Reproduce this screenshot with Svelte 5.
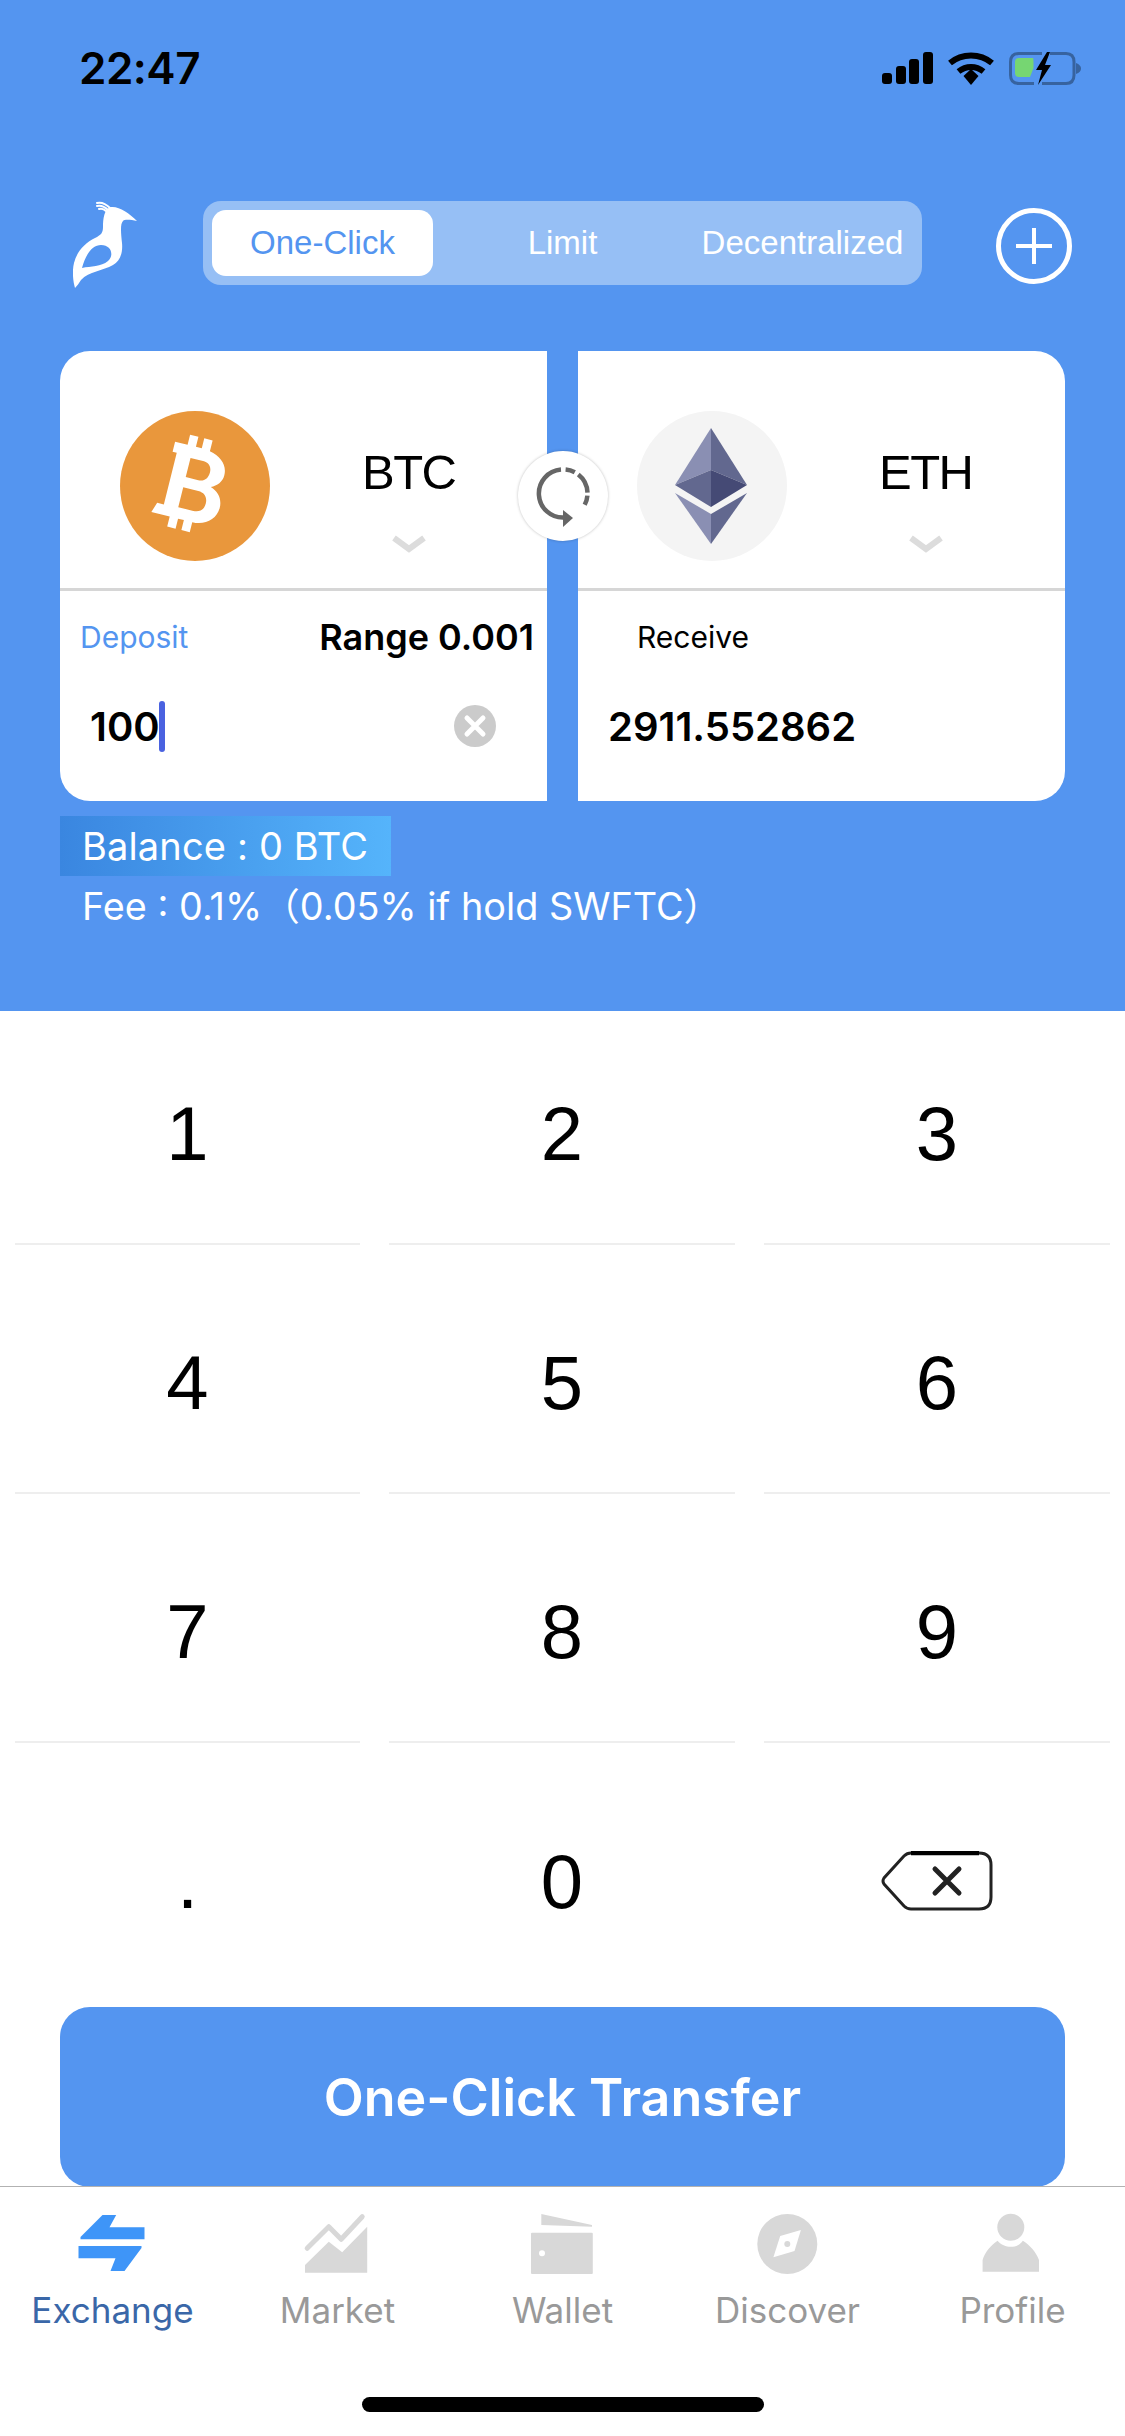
<script>
	const tabs = ['One-Click', 'Limit', 'Decentralized'];
	const keys = ['1', '2', '3', '4', '5', '6', '7', '8', '9', '.', '0', 'del'];
	const navItems = [
		{ label: 'Exchange', icon: 'exchange' },
		{ label: 'Market', icon: 'market' },
		{ label: 'Wallet', icon: 'wallet' },
		{ label: 'Discover', icon: 'discover' },
		{ label: 'Profile', icon: 'profile' }
	];
</script>

<div class="screen">
	<header class="top">
		<div class="status">
			<span class="time">22:47</span>
			<div class="status-icons">
				<svg width="51" height="32" viewBox="0 0 51 32">
					<rect x="0" y="21" width="10" height="11" rx="3" />
					<rect x="14" y="14" width="10" height="18" rx="3" />
					<rect x="27" y="7" width="10" height="25" rx="3" />
					<rect x="41" y="0" width="10" height="32" rx="3" />
				</svg>
				<svg class="wifi" width="46" height="33" viewBox="0 0 46 33" fill="none" stroke="#000" stroke-width="6">
					<path d="M2 11 C14 1 32 1 44 11" />
					<path d="M10.500 19.500 C18 13.500 28 13.500 35.500 19.500" />
					<path d="M15.500 24 L23 17 L30.500 24 L23 33 Z" fill="#000" stroke="none" />
				</svg>
				<svg class="battery" width="72" height="33" viewBox="0 0 72 33">
					<path d="M33 1.500 H10 Q1.500 1.500 1.500 10 V23 Q1.500 31.500 10 31.500 H25 M41 1.500 H57 Q65 1.500 65 10 V23 Q65 31.500 57 31.500 H33" fill="none" stroke="#37639f" stroke-width="3" />
					<path d="M67 11 Q72 13 72 16.500 Q72 20 67 22 Z" fill="#37639f" />
					<path d="M10 6 H24 Q24.500 6 24.500 12 V16 L21 25 H10 Q6 25 6 21 V10 Q6 6 10 6 Z" fill="#76d672" />
					<path d="M38 0 L27 18 H33 L29 33 L42 13 H36 L41 0 Z" fill="#000" />
				</svg>
			</div>
		</div>

		<div class="toolbar">
			<svg class="logo" width="64" height="88" viewBox="0 0 64 88">
				<path fill="#fff" fill-rule="evenodd" d="M38 6 C46 5 56 12 64 20 C58 19 52 18 50 20 C47 23 48 32 49 42 C50 52 47 60 40 64 C30 70 16 70 8 79 C6 82 4 85 2 87 C0 80 -1 70 1 62 C4 50 12 42 22 37 C28 34 30 32 30 26 C30 18 31 8 38 6 Z M28 44 C20 44 13 52 9 67 C18 65 28 66 35 60 C41 55 39 44 28 44 Z" />
				<path d="M37 7 C33 3 28 1 24 2 M35 9 C32 6 28 4 24 5 M33 10 C31 8 29 7 26 8" fill="none" stroke="#fff" stroke-width="2" stroke-linecap="round" />
			</svg>

			<div class="tabs">
				{#each tabs as tab, i}
					<div class="tab tab-{i}" class:active={i === 0}>{tab}</div>
				{/each}
			</div>

			<svg class="plus" width="76" height="76" viewBox="0 0 76 76" fill="none" stroke="#fff" stroke-width="5">
				<circle cx="38" cy="38" r="35.500" />
				<path d="M20 38 H56 M38 20 V56" stroke-width="4" />
			</svg>
		</div>

		<div class="cards">
			<section class="card card-left">
				<div class="coin-row">
					<svg class="coin" width="150" height="150" viewBox="0 0 150 150">
						<circle cx="75" cy="75" r="75" fill="#e9973c" />
						<g transform="translate(72 73) rotate(14) scale(0.86) translate(-78 -75)">
							<path fill="#fff" fill-rule="evenodd" d="M47 32 H62 V20 H72 V32 H79 V20 H89 V33 C103 36 112 44 112 56 C112 64 107 70 100 73 C110 76 116 84 116 94 C116 108 104 118 89 118 V130 H79 V118 H72 V130 H62 V118 H40 L44 106 H52 V44 H47 Z M69 46 V69 H84 C91 69 95 64 95 57 C95 50 91 46 84 46 Z M69 81 V105 H87 C95 105 99 100 99 93 C99 86 95 81 87 81 Z" />
						</g>
					</svg>
					<div class="coin-name">
						<span>BTC</span>
						<svg class="chevron" width="34" height="19" viewBox="0 0 34 19" fill="none" stroke="#dcdcdc" stroke-width="6"><path d="M2 3 L17 14 L32 3" /></svg>
					</div>
				</div>
				<div class="amount">
					<div class="amount-labels">
						<span class="deposit">Deposit</span>
						<span class="range">Range 0.001</span>
					</div>
					<div class="amount-value">
						<span class="value">100</span><span class="caret"></span>
						<svg class="clear" width="42" height="42" viewBox="0 0 42 42">
							<circle cx="21" cy="21" r="21" fill="#cbcbcb" />
							<path d="M13 13 L29 29 M29 13 L13 29" stroke="#fff" stroke-width="5" stroke-linecap="round" />
						</svg>
					</div>
				</div>
			</section>

			<section class="card card-right">
				<div class="coin-row">
					<svg class="coin" width="150" height="150" viewBox="0 0 150 150">
						<circle cx="75" cy="75" r="75" fill="#f4f4f4" />
						<path d="M74 17 L38 74 L74 59 Z" fill="#8a8fb3" />
						<path d="M74 17 L110 74 L74 59 Z" fill="#62688f" />
						<path d="M38 74 L74 59 V96 Z" fill="#62688f" />
						<path d="M110 74 L74 59 V96 Z" fill="#454a75" />
						<path d="M38 82 L74 103 V133 Z" fill="#8a8fb3" />
						<path d="M110 82 L74 103 V133 Z" fill="#62688f" />
					</svg>
					<div class="coin-name">
						<span>ETH</span>
						<svg class="chevron" width="34" height="19" viewBox="0 0 34 19" fill="none" stroke="#dcdcdc" stroke-width="6"><path d="M2 3 L17 14 L32 3" /></svg>
					</div>
				</div>
				<div class="amount">
					<div class="amount-labels">
						<span class="receive">Receive</span>
					</div>
					<div class="amount-value">
						<span class="value">2911.552862</span>
					</div>
				</div>
			</section>

			<div class="swap">
				<svg width="90" height="90" viewBox="0 0 90 90" fill="none" stroke="#666" stroke-width="4.500">
					<path d="M43 18.600 A24 24 0 0 0 46 66.500" />
					<path d="M47.600 18.600 A24 24 0 0 1 56.800 21.300" />
					<path d="M60.300 23.600 A24 24 0 0 1 69.500 41.700" />
					<path d="M69.400 44.600 A24 24 0 0 1 66.700 53.800" />
					<path d="M45 59 L55 67 L45 76 Z" fill="#666" stroke="none" />
				</svg>
			</div>
		</div>

		<div class="balance">Balance : 0 BTC</div>
		<div class="fee">Fee : 0.1%（0.05% if hold SWFTC）</div>
	</header>

	<div class="keypad">
		{#each keys as key, i}
			<button class="key" class:last-row={i > 8} class:del={key === 'del'} type="button">
				{#if key === 'del'}
					<svg width="112" height="60" viewBox="0 0 112 60" fill="none" stroke="#222">
						<path d="M30 2 H98 Q110 2 110 14 V46 Q110 58 98 58 H30 Q26 58 23 55 L3 33 Q1 30 3 27 L23 5 Q26 2 30 2 Z" stroke-width="3" />
						<path d="M30 2 H98" stroke="#000" stroke-width="4.500" />
						<path d="M54 18 L78 42 M78 18 L54 42" stroke-width="5" stroke-linecap="round" />
					</svg>
				{:else}
					{key}
				{/if}
			</button>
		{/each}
	</div>

	<div class="action">
		<button class="transfer" type="button">One-Click Transfer</button>
	</div>

	<nav class="nav">
		{#each navItems as item}
			<div class="nav-item" class:current={item.icon === 'exchange'}>
				<svg width="66" height="62" viewBox="0 0 66 62">
					{#if item.icon === 'exchange'}
						<path d="M22.500 2 H36.200 L29.500 14.300 H64.500 V26.300 H0.500 V24 Z" fill="#3e95f8" />
						<path d="M-1.500 33 H61.500 V35 L44.500 58 H30.500 L35.500 45.300 H-1.500 Z" fill="#3e95f8" />
					{:else if item.icon === 'market'}
						<path d="M2.200 35.300 L23.800 13.700 L36.200 26.300 L57.200 3.700" fill="none" stroke="#d8d8d8" stroke-width="5" stroke-linecap="round" stroke-linejoin="round" />
						<path d="M0 52 L23.800 28.700 L37.200 39.300 L62.200 13.700 V59.700 H0 Z" fill="#d8d8d8" />
					{:else if item.icon === 'wallet'}
						<path d="M11.300 1 L62 12 V13.700 L11.300 12 Z" fill="#d8d8d8" />
						<rect x="1" y="19.700" width="61.800" height="41.300" rx="1" fill="#d8d8d8" />
						<circle cx="12" cy="40.300" r="3" fill="#fff" />
					{:else if item.icon === 'discover'}
						<circle cx="32.300" cy="31" r="30" fill="#d8d8d8" />
						<path d="M45.900 17 L25.200 23 L18.400 44.300 L39.500 38 Z" fill="#fff" />
						<circle cx="32.300" cy="31" r="3" fill="#d8d8d8" />
					{:else}
						<circle cx="30.800" cy="14.300" r="13.500" fill="#d8d8d8" />
						<path d="M2.600 58.700 V47 C5 39 11 32 17.600 27.700 C21 32 26 33.700 30.800 33.700 C36 33.700 40 32 42.900 27.700 C50 32 56 39 59 47 V58.700 Z" fill="#d8d8d8" />
					{/if}
				</svg>
				<span>{item.label}</span>
			</div>
		{/each}
	</nav>

	<div class="home-bar"></div>
</div>

<style>
	:global(body) {
		margin: 0;
		background: #fff;
	}

	.screen {
		width: 1125px;
		height: 2436px;
		overflow: hidden;
		background: #fff;
		font-family: Inter, 'Noto Sans CJK SC', sans-serif;
		display: flex;
		flex-direction: column;
	}

	.top {
		height: 1011px;
		box-sizing: border-box;
		background: #5495f0;
		color: #fff;
		flex: none;
	}

	.status {
		height: 201px;
		box-sizing: border-box;
		padding: 44px 44px 0 79px;
		display: flex;
		justify-content: space-between;
		align-items: flex-start;
	}

	.time {
		font-size: 44px;
		line-height: 48px;
		font-weight: 600;
		letter-spacing: -0.5px;
		color: #000;
	}

	.status-icons {
		display: flex;
		gap: 15px;
		padding-top: 8px;
	}

	.status-icons svg {
		flex: none;
	}

	.toolbar {
		height: 150px;
		box-sizing: border-box;
		padding: 0 53px 0 73px;
		display: flex;
		align-items: flex-start;
	}

	.tabs {
		flex: none;
		width: 719px;
		height: 84px;
		margin-left: 66px;
		box-sizing: border-box;
		padding: 9px;
		background: #96bff5;
		border-radius: 18px;
		display: flex;
		align-items: center;
		font-family: 'Liberation Sans', sans-serif;
		font-size: 33px;
	}

	.tab {
		height: 66px;
		line-height: 66px;
		text-align: center;
	}

	.tab-0 {
		width: 221px;
	}

	.tab-1 {
		width: 259px;
	}

	.tab-2 {
		flex: 1;
		white-space: nowrap;
	}

	.tab.active {
		background: #fff;
		color: #5495f0;
		border-radius: 14px;
	}

	.plus {
		flex: none;
		margin: 7px 0 0 74px;
	}

	.cards {
		position: relative;
		margin: 0 60px;
		display: flex;
		gap: 31px;
		color: #000;
	}

	.card {
		flex: 1;
		height: 450px;
		background: #fff;
	}

	.card-left {
		border-radius: 30px 0 0 30px;
	}

	.card-right {
		border-radius: 0 30px 30px 0;
	}

	.coin-row {
		height: 240px;
		box-sizing: border-box;
		border-bottom: 3px solid #d6d6d6;
		display: flex;
		align-items: flex-start;
		padding-top: 60px;
	}

	.card-left .coin-row {
		padding-left: 60px;
	}

	.card-right .coin-row {
		padding-left: 59px;
	}

	.coin-name {
		display: flex;
		flex-direction: column;
		align-items: center;
		margin-left: 92px;
		font-family: 'Liberation Sans', sans-serif;
		font-size: 49px;
		letter-spacing: -1.5px;
		line-height: 56px;
		padding-top: 33px;
	}

	.chevron {
		margin-top: 35px;
	}

	.amount-labels {
		height: 64px;
		display: flex;
		justify-content: space-between;
		align-items: flex-end;
		padding: 0 13px 0 20px;
		font-size: 30px;
	}

	.deposit {
		color: #5495f0;
	}

	.range {
		font-size: 36px;
		line-height: 40px;
		font-weight: 600;
		margin-bottom: -2px;
	}

	.receive {
		margin-left: 39px;
	}

	.amount-value {
		position: relative;
		display: flex;
		align-items: center;
		height: 60px;
		margin-top: 41px;
		padding-left: 30px;
		font-size: 40px;
		font-weight: 600;
	}

	.caret {
		width: 6px;
		height: 51px;
		margin-left: -1px;
		background: #4a62e0;
		border-radius: 3px;
	}

	.clear {
		position: absolute;
		left: 394px;
		top: 9px;
	}

	.swap {
		position: absolute;
		left: 458px;
		top: 100px;
		width: 90px;
		height: 90px;
		background: #fff;
		border-radius: 50%;
		box-shadow: 0 0 3px rgba(0, 0, 0, 0.25);
	}

	.balance {
		width: 331px;
		height: 60px;
		margin: 15px 0 0 60px;
		box-sizing: border-box;
		padding-left: 22px;
		line-height: 60px;
		font-size: 38px;
		letter-spacing: 0.15px;
		white-space: nowrap;
		background: linear-gradient(90deg, #3a86e0, #55b4fb);
	}

	.fee {
		margin: 0 0 0 82px;
		line-height: 60px;
		font-size: 37.8px;
		white-space: nowrap;
	}

	.keypad {
		height: 980px;
		flex: none;
		box-sizing: border-box;
		display: grid;
		grid-template-columns: 345px 346px 346px;
		grid-template-rows: 234px 249px 249px 248px;
		column-gap: 29px;
		padding: 0 15px;
	}

	.key {
		border: 0;
		border-bottom: 2px solid #eee;
		background: none;
		color: #000;
		font-family: 'Liberation Sans', sans-serif;
		font-size: 76px;
		line-height: 86px;
		display: flex;
		align-items: flex-end;
		justify-content: center;
		padding: 0 0 66px;
	}

	.key.last-row {
		border-bottom: 0;
	}

	.key.del {
		padding-bottom: 80px;
	}

	.action {
		flex: none;
		height: 180px;
		margin: 16px 60px 0;
	}

	.transfer {
		display: block;
		width: 100%;
		height: 100%;
		border: 0;
		border-radius: 30px;
		background: #5495f0;
		color: #fff;
		font-family: inherit;
		font-size: 52px;
		font-weight: 600;
	}

	.nav {
		margin-top: -1px;
		flex: none;
		height: 211px;
		box-sizing: border-box;
		border-top: 1px solid #b2b2b2;
		padding-top: 26px;
		display: grid;
		grid-template-columns: repeat(5, 225px);
	}

	.nav-item {
		display: flex;
		flex-direction: column;
		align-items: center;
		color: #999;
		font-size: 35px;
		height: 130px;
	}

	.nav-item svg {
		overflow: visible;
	}

	.nav-item span {
		margin-top: 13px;
		line-height: 44px;
	}

	.nav-item.current {
		color: #3a67a8;
	}

	.home-bar {
		flex: none;
		width: 402px;
		height: 15px;
		margin: 0 auto;
		background: #000;
		border-radius: 8px;
	}
</style>
